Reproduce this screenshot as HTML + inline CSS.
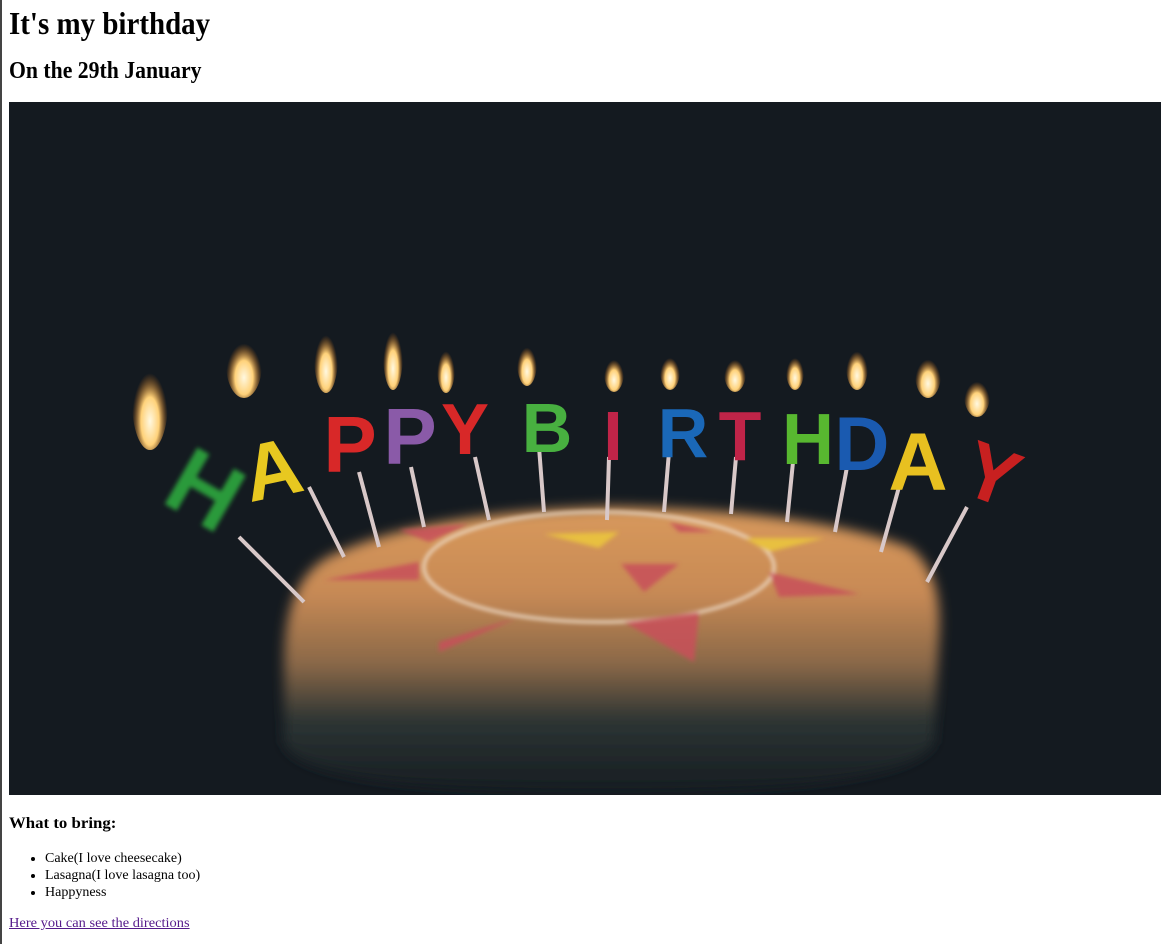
<!DOCTYPE html>
<html><head><meta charset="utf-8"><style>
html,body{margin:0;padding:0;background:#fff;}
body{width:1169px;height:944px;position:relative;overflow:hidden;font-family:"Liberation Serif",serif;color:#000;}
.edge{position:absolute;left:0;top:0;width:2px;height:944px;background:#444;}
.a{position:absolute;left:9px;margin:0;white-space:nowrap;transform-origin:0 50%;}
h1.a{font-size:32px;top:3px;line-height:40px;transform:scaleX(0.905);}
h2.a{font-size:24px;top:56px;line-height:30px;transform:scaleX(0.905);}
h4.a{font-size:16px;top:814px;line-height:20px;transform:scaleX(1.05);}
ul.a{font-size:14px;top:850px;line-height:17px;padding-left:36px;}
a.a{font-size:14px;top:915px;line-height:17px;color:#551a8b;text-decoration:underline;transform:scaleX(1.03);}
svg{position:absolute;left:9px;top:102px;}
</style></head><body>
<div class="edge"></div>
<h1 class="a">It's my birthday</h1>
<h2 class="a">On the 29th January</h2>
<svg width="1152" height="693" viewBox="0 0 1152 693">
<defs>
<linearGradient id="body" x1="0" y1="0" x2="0" y2="1">
<stop offset="0" stop-color="#d8995c"/><stop offset="0.3" stop-color="#c88a55"/><stop offset="0.55" stop-color="#8a6848"/><stop offset="0.75" stop-color="#2c3433"/><stop offset="1" stop-color="#161d22"/>
</linearGradient>
<radialGradient id="fl" cx="0.5" cy="0.7" r="0.5">
<stop offset="0" stop-color="#fff8e0"/><stop offset="0.5" stop-color="#ffd27a"/><stop offset="1" stop-color="#c86a10" stop-opacity="0"/>
</radialGradient>
<filter id="bl"><feGaussianBlur stdDeviation="6"/></filter>
<filter id="bl2"><feGaussianBlur stdDeviation="2"/></filter>
</defs>
<rect width="1152" height="693" fill="#141a20"/>
<path d="M275 560 Q275 470 330 450 Q420 410 603 405 Q800 408 900 445 Q935 470 930 540 L925 640 Q900 690 600 690 Q290 690 275 640 Z" fill="url(#body)" filter="url(#bl)"/>
<g filter="url(#bl2)">
<ellipse cx="590" cy="465" rx="175" ry="55" fill="none" stroke="#eedcc8" stroke-width="3"/>
<g fill="#c8505a" opacity="0.85">
<polygon points="612,462 670,462 635,490"/><polygon points="760,470 850,492 770,495"/><polygon points="615,520 690,510 685,560"/>
<polygon points="315,478 410,460 410,478"/><polygon points="430,540 510,515 430,550"/><polygon points="390,428 460,422 420,440"/><polygon points="660,420 705,430 670,430"/>
</g>
<g fill="#e8c040"><polygon points="535,432 610,430 590,446"/><polygon points="735,436 815,436 760,450"/></g>
</g>
<g stroke="#d8c8c8" stroke-width="4">
<line x1="230" y1="435" x2="295" y2="500"/><line x1="300" y1="385" x2="335" y2="455"/><line x1="350" y1="370" x2="370" y2="445"/>
<line x1="402" y1="365" x2="415" y2="425"/><line x1="466" y1="355" x2="480" y2="418"/><line x1="530" y1="345" x2="535" y2="410"/>
<line x1="600" y1="355" x2="598" y2="418"/><line x1="660" y1="350" x2="655" y2="410"/><line x1="727" y1="355" x2="722" y2="412"/>
<line x1="784" y1="360" x2="778" y2="420"/><line x1="838" y1="365" x2="826" y2="430"/><line x1="890" y1="385" x2="872" y2="450"/><line x1="958" y1="405" x2="918" y2="480"/>
</g>
<g font-family="Liberation Sans, sans-serif" font-weight="bold" font-size="80" text-anchor="middle">
<text x="195" y="420" fill="#2a9a3a" transform="rotate(30 195 390)" font-size="95" filter="url(#bl2)">H</text>
<text x="262" y="395" fill="#e8c820" transform="rotate(-12 262 360)">A</text>
<text x="341" y="370" fill="#d82828">P</text>
<text x="401" y="362" fill="#8a5aa8">P</text>
<text x="456" y="352" fill="#d82828" font-size="72">Y</text>
<text x="538" y="350" fill="#48b040" font-size="70">B</text>
<text x="604" y="358" fill="#c02448" font-size="70">I</text>
<text x="674" y="355" fill="#1a68b8" font-size="70">R</text>
<text x="731" y="358" fill="#c02448" font-size="70">T</text>
<text x="799" y="362" fill="#58b830" font-size="72">H</text>
<text x="853" y="368" fill="#1a5ab0" font-size="76">D</text>
<text x="909" y="388" fill="#e8c020" font-size="82">A</text>
<text x="984" y="400" fill="#c82020" transform="rotate(20 984 370)" font-size="80">Y</text>
</g>
<g fill="url(#fl)">
<ellipse cx="141" cy="300" rx="18" ry="48"/><ellipse cx="235" cy="262" rx="18" ry="34"/><ellipse cx="317" cy="255" rx="12" ry="36"/>
<ellipse cx="384" cy="252" rx="10" ry="36"/><ellipse cx="437" cy="265" rx="9" ry="26"/><ellipse cx="518" cy="260" rx="10" ry="24"/>
<ellipse cx="605" cy="270" rx="10" ry="20"/><ellipse cx="661" cy="268" rx="10" ry="20"/><ellipse cx="726" cy="270" rx="11" ry="20"/>
<ellipse cx="786" cy="268" rx="9" ry="20"/><ellipse cx="848" cy="264" rx="11" ry="24"/><ellipse cx="919" cy="272" rx="13" ry="24"/><ellipse cx="968" cy="293" rx="13" ry="22"/>
</g>
</svg>
<h4 class="a">What to bring:</h4>
<ul class="a"><li>Cake(I love cheesecake)</li><li>Lasagna(I love lasagna too)</li><li>Happyness</li></ul>
<a class="a" href="#">Here you can see the directions</a>
</body></html>
